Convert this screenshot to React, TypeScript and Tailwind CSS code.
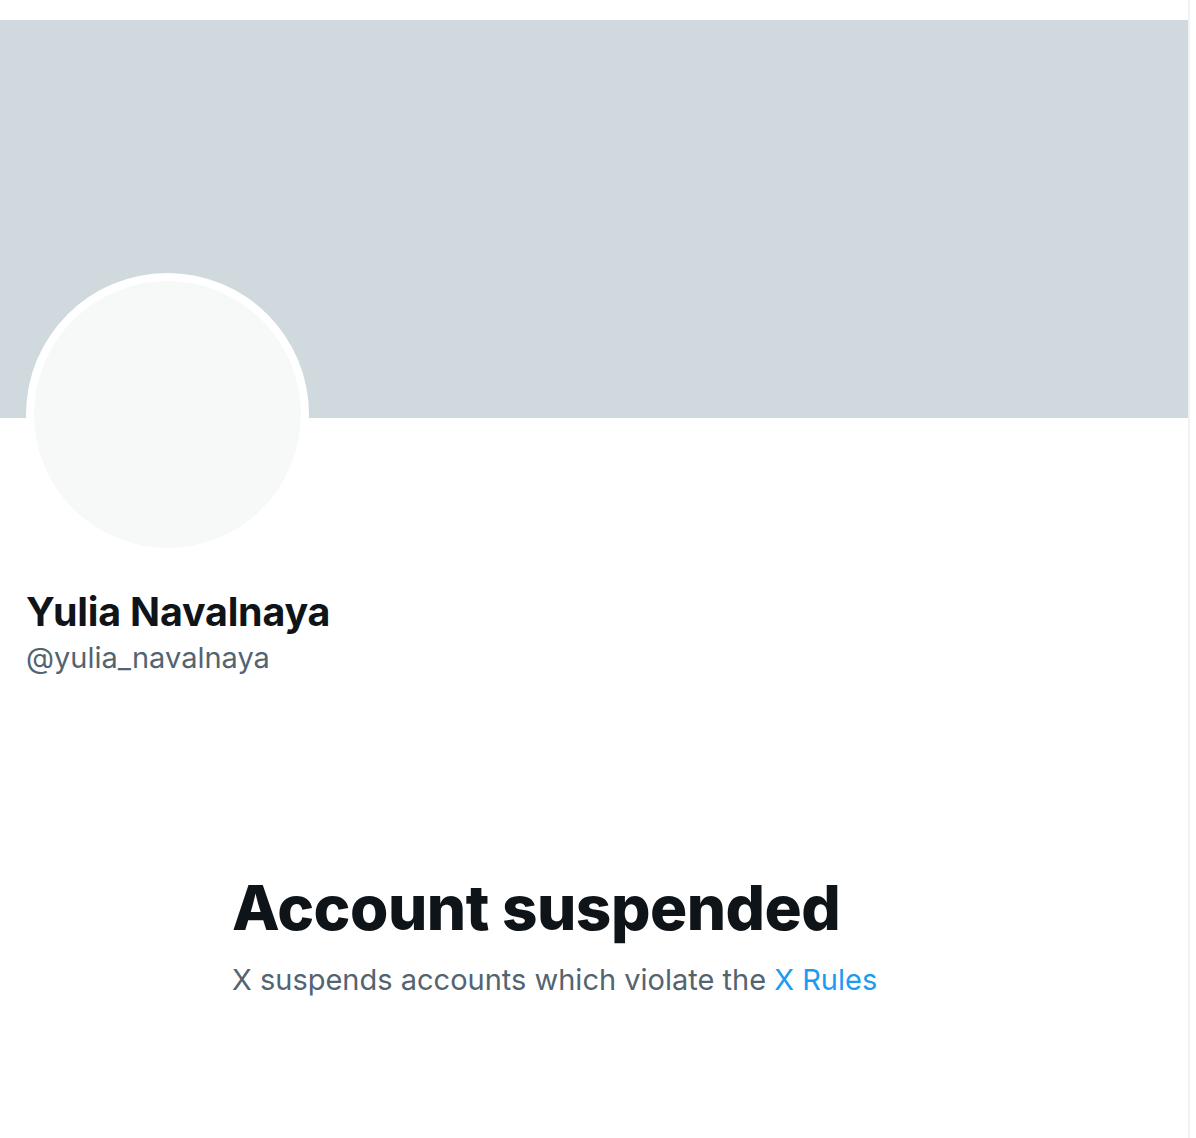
export default function App() {
  return (
    <div className="min-h-[1138px] w-full bg-white font-['Inter',sans-serif]">
      <div className="w-[1190px] min-h-[1138px] border-r-2 border-[#eff3f4] pt-[20px]">
        {/* banner */}
        <div className="h-[398px] w-[1188px] bg-[#cfd9de]" />

        {/* avatar */}
        <div className="ml-[26px] -mt-[145px] h-[283px] w-[283px] rounded-full bg-white p-[8px]">
          <div className="h-full w-full rounded-full bg-[#f7f9f9]" />
        </div>

        {/* name */}
        <div className="ml-[26px] mt-[30px] flex flex-col">
          <span className="text-[39.4px] leading-[52px] font-bold tracking-[-0.2px] text-[#0f1419]">
            Yulia Navalnaya
          </span>
          <span className="text-[29px] leading-[40px] text-[#536471]">
            @yulia_navalnaya
          </span>
        </div>

        {/* suspended */}
        <div className="ml-[232px] mt-[190px] flex flex-col">
          <h1 className="text-[62px] leading-[80px] font-extrabold tracking-[-0.5px] text-[#0f1419]">
            Account suspended
          </h1>
          <p className="mt-[12px] text-[29px] leading-[40px] text-[#536471]">
            X suspends accounts which violate the{' '}
            <a className="text-[#1d9bf0]">X Rules</a>
          </p>
        </div>
      </div>
    </div>
  );
}
